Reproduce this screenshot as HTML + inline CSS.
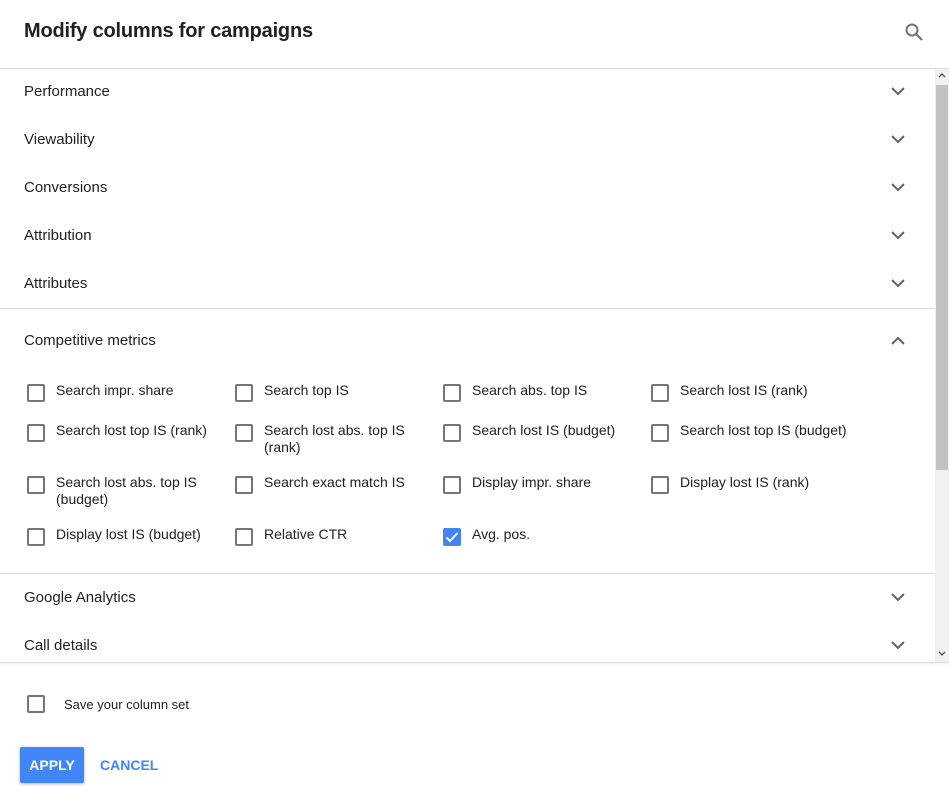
<!DOCTYPE html>
<html><head><style>
*{margin:0;padding:0;box-sizing:border-box}
body{width:949px;height:786px;background:#fff;font-family:"Liberation Sans",Arial,sans-serif;color:#202124;position:relative;overflow:hidden}
.a{position:absolute}
.title{left:24px;top:20px;font-size:20px;font-weight:bold;color:#212121;letter-spacing:-0.2px}
.sec{left:24px;font-size:15px;color:#212121}
.chev{left:890px;width:16px;height:10px}
.cb{width:18px;height:18px;border:2px solid #757575;border-radius:2px}
.lbl{font-size:14px;color:#212121;line-height:17px;width:170px}
.hr{left:0;width:935px;height:1px;background:#dadce0}
</style></head><body>
<div class="a title">Modify columns for campaigns</div>
<svg class="a" style="left:904px;top:22px" width="20" height="20" viewBox="0 0 20 20"><circle cx="8" cy="8" r="5.5" fill="none" stroke="#757575" stroke-width="2"/><line x1="12" y1="12" x2="18" y2="18" stroke="#757575" stroke-width="2.2"/></svg>
<div class="a" style="left:0;top:68px;width:949px;height:1px;background:#dadce0"></div>

<div class="a sec" style="top:83px">Performance</div>
<div class="a sec" style="top:131px">Viewability</div>
<div class="a sec" style="top:179px">Conversions</div>
<div class="a sec" style="top:227px">Attribution</div>
<div class="a sec" style="top:275px">Attributes</div>
<div class="a hr" style="top:308px"></div>
<div class="a sec" style="top:332px">Competitive metrics</div>
<div class="a hr" style="top:573px"></div>
<div class="a sec" style="top:589px">Google Analytics</div>
<div class="a sec" style="top:637px">Call details</div>

<svg class="a chev" style="top:86px" viewBox="0 0 16 10"><path d="M2 2l6 6 6-6" fill="none" stroke="#5f6368" stroke-width="2"/></svg>
<svg class="a chev" style="top:134px" viewBox="0 0 16 10"><path d="M2 2l6 6 6-6" fill="none" stroke="#5f6368" stroke-width="2"/></svg>
<svg class="a chev" style="top:182px" viewBox="0 0 16 10"><path d="M2 2l6 6 6-6" fill="none" stroke="#5f6368" stroke-width="2"/></svg>
<svg class="a chev" style="top:230px" viewBox="0 0 16 10"><path d="M2 2l6 6 6-6" fill="none" stroke="#5f6368" stroke-width="2"/></svg>
<svg class="a chev" style="top:278px" viewBox="0 0 16 10"><path d="M2 2l6 6 6-6" fill="none" stroke="#5f6368" stroke-width="2"/></svg>
<svg class="a chev" style="top:336px" viewBox="0 0 16 10"><path d="M2 8l6-6 6 6" fill="none" stroke="#5f6368" stroke-width="2"/></svg>
<svg class="a chev" style="top:592px" viewBox="0 0 16 10"><path d="M2 2l6 6 6-6" fill="none" stroke="#5f6368" stroke-width="2"/></svg>
<svg class="a chev" style="top:640px" viewBox="0 0 16 10"><path d="M2 2l6 6 6-6" fill="none" stroke="#5f6368" stroke-width="2"/></svg>

<!-- row 1 -->
<div class="a cb" style="left:27px;top:384px"></div><div class="a lbl" style="left:56px;top:382px">Search impr. share</div>
<div class="a cb" style="left:235px;top:384px"></div><div class="a lbl" style="left:264px;top:382px">Search top IS</div>
<div class="a cb" style="left:443px;top:384px"></div><div class="a lbl" style="left:472px;top:382px">Search abs. top IS</div>
<div class="a cb" style="left:651px;top:384px"></div><div class="a lbl" style="left:680px;top:382px">Search lost IS (rank)</div>
<!-- row 2 -->
<div class="a cb" style="left:27px;top:424px"></div><div class="a lbl" style="left:56px;top:422px">Search lost top IS (rank)</div>
<div class="a cb" style="left:235px;top:424px"></div><div class="a lbl" style="left:264px;top:422px;width:160px">Search lost abs. top IS (rank)</div>
<div class="a cb" style="left:443px;top:424px"></div><div class="a lbl" style="left:472px;top:422px">Search lost IS (budget)</div>
<div class="a cb" style="left:651px;top:424px"></div><div class="a lbl" style="left:680px;top:422px;width:200px">Search lost top IS (budget)</div>
<!-- row 3 -->
<div class="a cb" style="left:27px;top:476px"></div><div class="a lbl" style="left:56px;top:474px;width:160px">Search lost abs. top IS (budget)</div>
<div class="a cb" style="left:235px;top:476px"></div><div class="a lbl" style="left:264px;top:474px">Search exact match IS</div>
<div class="a cb" style="left:443px;top:476px"></div><div class="a lbl" style="left:472px;top:474px">Display impr. share</div>
<div class="a cb" style="left:651px;top:476px"></div><div class="a lbl" style="left:680px;top:474px">Display lost IS (rank)</div>
<!-- row 4 -->
<div class="a cb" style="left:27px;top:528px"></div><div class="a lbl" style="left:56px;top:526px">Display lost IS (budget)</div>
<div class="a cb" style="left:235px;top:528px"></div><div class="a lbl" style="left:264px;top:526px">Relative CTR</div>
<div class="a" style="left:443px;top:528px;width:18px;height:18px;background:#4285f4;border-radius:2px"><svg width="18" height="18" viewBox="0 0 18 18"><path d="M3.5 9.5l3.5 3.5 7.5-8" fill="none" stroke="#fff" stroke-width="2"/></svg></div>
<div class="a lbl" style="left:472px;top:526px">Avg. pos.</div>

<!-- scrollbar -->
<div class="a" style="left:935px;top:69px;width:14px;height:594px;background:#f1f1f1"></div>
<div class="a" style="left:936px;top:85px;width:12px;height:385px;background:#c1c1c1"></div>
<svg class="a" style="left:938px;top:72px" width="8" height="6" viewBox="0 0 8 6"><path d="M1 5l3-3 3 3" fill="none" stroke="#505050" stroke-width="1.3"/></svg>
<svg class="a" style="left:938px;top:651px" width="8" height="6" viewBox="0 0 8 6"><path d="M1 1l3 3 3-3" fill="none" stroke="#505050" stroke-width="1.3"/></svg>

<!-- footer -->
<div class="a" style="left:0;top:662px;width:949px;height:1px;background:#dadce0;box-shadow:0 1px 3px rgba(0,0,0,.15)"></div>
<div class="a cb" style="left:27px;top:695px"></div>
<div class="a" style="left:64px;top:697px;font-size:13px;color:#212121">Save your column set</div>
<div class="a" style="left:20px;top:747px;width:64px;height:36px;background:#4285f4;border-radius:2px;box-shadow:0 1px 3px rgba(0,0,0,.3);color:#fff;font-size:14px;font-weight:bold;text-align:center;line-height:36px">APPLY</div>
<div class="a" style="left:100px;top:757px;font-size:14px;font-weight:bold;color:#4285f4">CANCEL</div>
</body></html>
